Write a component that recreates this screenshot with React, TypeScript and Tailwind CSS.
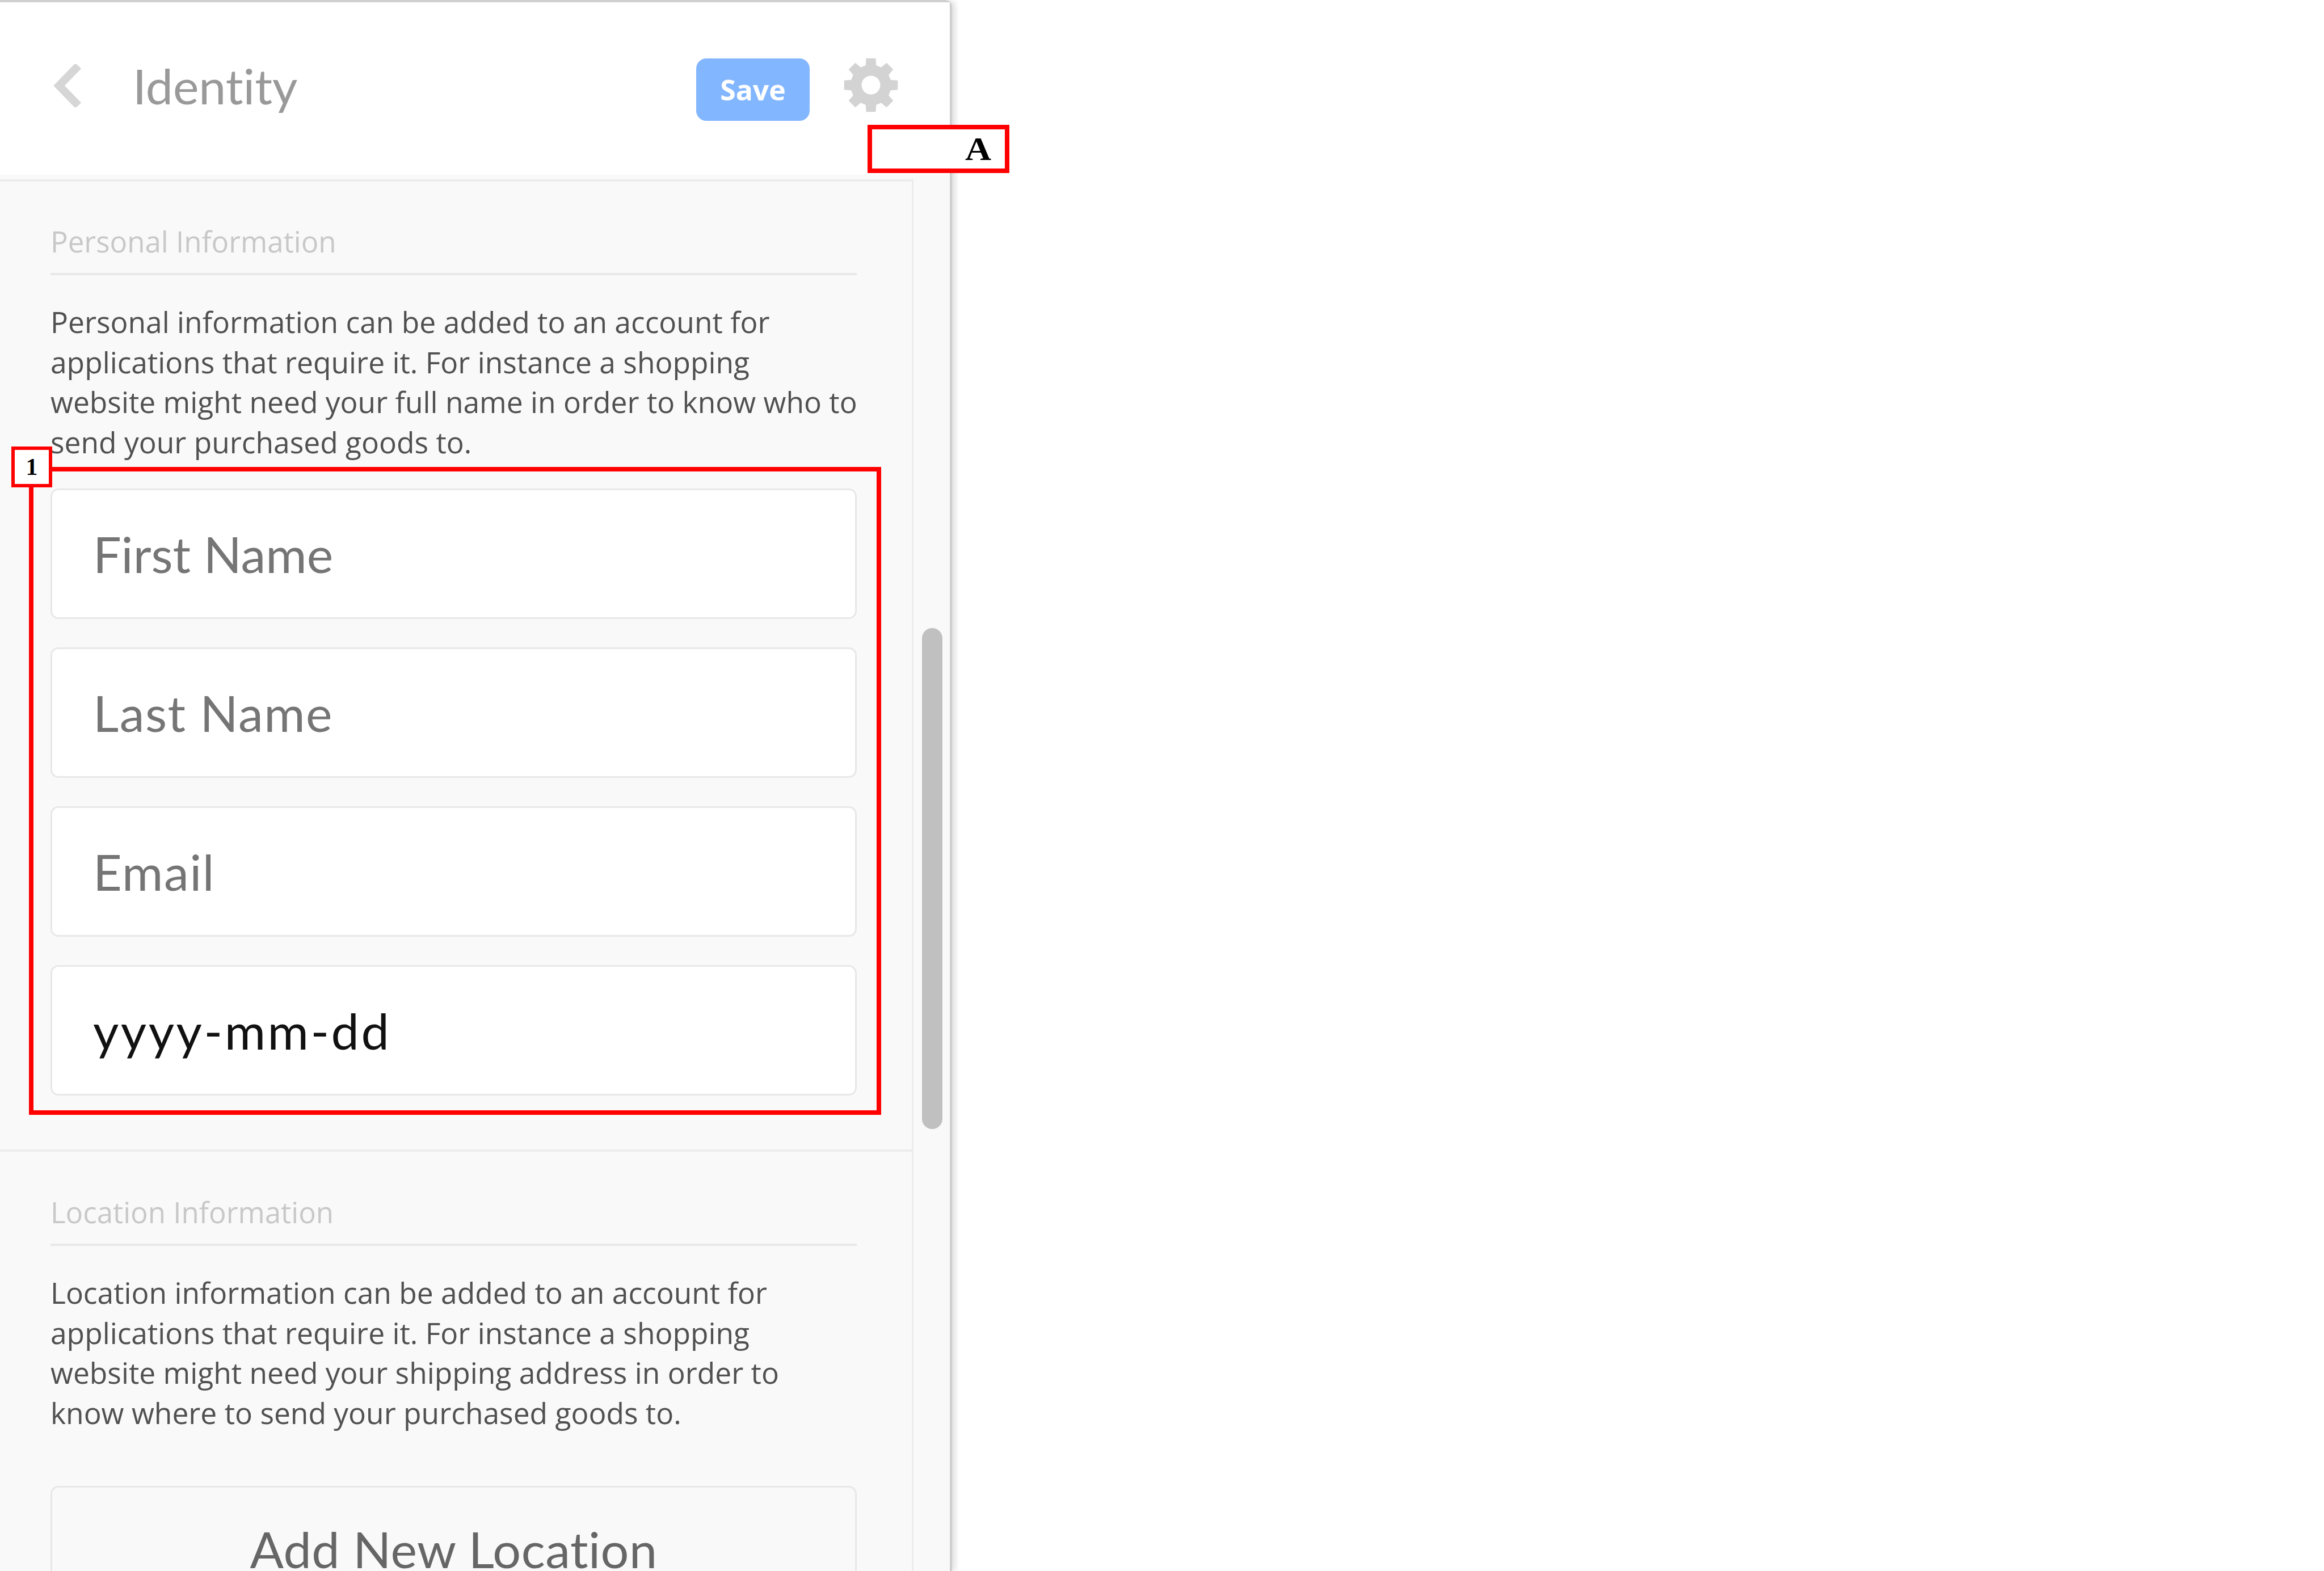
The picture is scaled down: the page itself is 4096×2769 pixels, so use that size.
import React from 'react';

const gearPath = () => {
  let d = '';
  for (let i = 0; i < 8; i++) {
    const a = i * 45 - 90;
    const pts: [number, number][] = [[a - 15, 36], [a - 10, 48], [a + 10, 48], [a + 15, 36]];
    pts.forEach(([deg, r], j) => {
      const rad = (deg * Math.PI) / 180;
      d += `${i === 0 && j === 0 ? 'M' : 'L'}${(r * Math.cos(rad)).toFixed(2)} ${(r * Math.sin(rad)).toFixed(2)} `;
    });
  }
  return d + 'Z M16.5 0 A16.5 16.5 0 1 0 -16.5 0 A16.5 16.5 0 1 0 16.5 0 Z';
};

const bodyText = "font-['Open_Sans',sans-serif] text-[51.5px] leading-[70.5px] text-[#505050]";
const headingText = "font-['Open_Sans',sans-serif] text-[51px] leading-[68px] text-[#c8c8c8]";
const inputClass =
  "flex h-[230px] items-center rounded-[14px] border-[3px] border-[#e8e8e8] bg-white pl-[72px] font-['Lato',sans-serif] text-[88px] [font-variant-ligatures:none]";

function SectionHeading({ children }: { children: string }) {
  return <div className={`${headingText} border-b-[4px] border-[#e8e8e8] pb-[22px]`}>{children}</div>;
}

export default function App() {
  return (
    <div className="relative h-[2769px] w-[4096px] overflow-hidden bg-white">
      <div className="flex h-full w-[1678px] flex-col rounded-tr-[12px] border-t-[4px] border-r-[4px] border-[#cfcfcf] shadow-[6px_0_10px_rgba(0,0,0,0.12)]">
        {/* header */}
        <div className="flex h-[304px] shrink-0 items-center bg-white">
          <svg className="mb-[10px] ml-[92px] h-[76px] w-[52px]" viewBox="0 0 52 76">
            <path d="M46 3 L12 38 L46 73" fill="none" stroke="#d6d6d6" strokeWidth="14" />
          </svg>
          <div className="mb-[10px] ml-[90px] font-['Lato',sans-serif] text-[86px] leading-none text-[#999999] [font-variant-ligatures:none]">Identity</div>
          <button className="ml-auto mt-[4px] flex h-[110px] w-[200px] items-center justify-center rounded-[18px] bg-[#82b6ff] font-['Open_Sans',sans-serif] text-[50px] font-bold text-white">
            Save
          </button>
          <svg className="mb-[12px] ml-[60px] mr-[91px] h-[96px] w-[96px]" viewBox="-48 -48 96 96">
            <path d={gearPath()} fill="#d3d3d3" fillRule="evenodd" />
          </svg>
        </div>

        <div className="flex min-h-0 flex-1 bg-[#f9f9f9]">
          <div className="mt-[8px] w-[1610px] shrink-0 border-t-[4px] border-r-[3px] border-[#ececec]">
            {/* personal */}
            <div className="border-b-[4px] border-[#ececec] pl-[89px] pr-[97px] pt-[71px] pb-[95px]">
              <SectionHeading>Personal Information</SectionHeading>
              <p className={`${bodyText} mt-[47px] whitespace-nowrap`}>
                Personal information can be added to an account for<br />
                applications that require it. For instance a shopping<br />
                website might need your full name in order to know who to<br />
                send your purchased goods to.
              </p>
              <div className="mt-[47px] flex flex-col gap-[50px]">
                <div className={`${inputClass} text-[#757575]`}>First Name</div>
                <div className={`${inputClass} tracking-[1.5px] text-[#757575]`}>Last Name</div>
                <div className={`${inputClass} tracking-[1.5px] text-[#757575]`}>Email</div>
                <div className={`${inputClass} tracking-[3.5px] text-[#111111]`}>yyyy-mm-dd</div>
              </div>
            </div>
            {/* location */}
            <div className="pl-[89px] pr-[97px] pt-[72px]">
              <SectionHeading>Location Information</SectionHeading>
              <p className={`${bodyText} mt-[47px] whitespace-nowrap`}>
                Location information can be added to an account for<br />
                applications that require it. For instance a shopping<br />
                website might need your shipping address in order to<br />
                know where to send your purchased goods to.
              </p>
              <div className="mt-[94px] flex h-[222px] items-center justify-center rounded-[14px] border-[3px] border-[#e8e8e8] font-['Lato',sans-serif] text-[88px] leading-[70px] tracking-[0.5px] text-[#666666]">
                Add New Location
              </div>
            </div>
          </div>
          {/* scrollbar */}
          <div className="flex-1 pl-[15px] pt-[799px]">
            <div className="h-[883px] w-[36px] rounded-full bg-[#c0c0c0]" />
          </div>
        </div>
      </div>

      {/* annotations */}
      <div className="absolute left-[1529px] top-[220px] flex h-[85px] w-[250px] items-center justify-end border-[8px] border-[#ff0000] bg-white pr-[26px]">
        <span className="inline-block scale-x-[1.1] font-['Liberation_Serif',serif] text-[58px] leading-none font-bold text-black">A</span>
      </div>
      <div className="absolute left-[51px] top-[823px] h-[1142px] w-[1502px] border-[8px] border-[#ff0000]" />
      <div className="absolute left-[20px] top-[787px] flex h-[72px] w-[72px] items-center justify-center border-[6px] border-[#ff0000] bg-white font-['Liberation_Serif',serif] text-[42px] font-bold text-black">
        1
      </div>
    </div>
  );
}
